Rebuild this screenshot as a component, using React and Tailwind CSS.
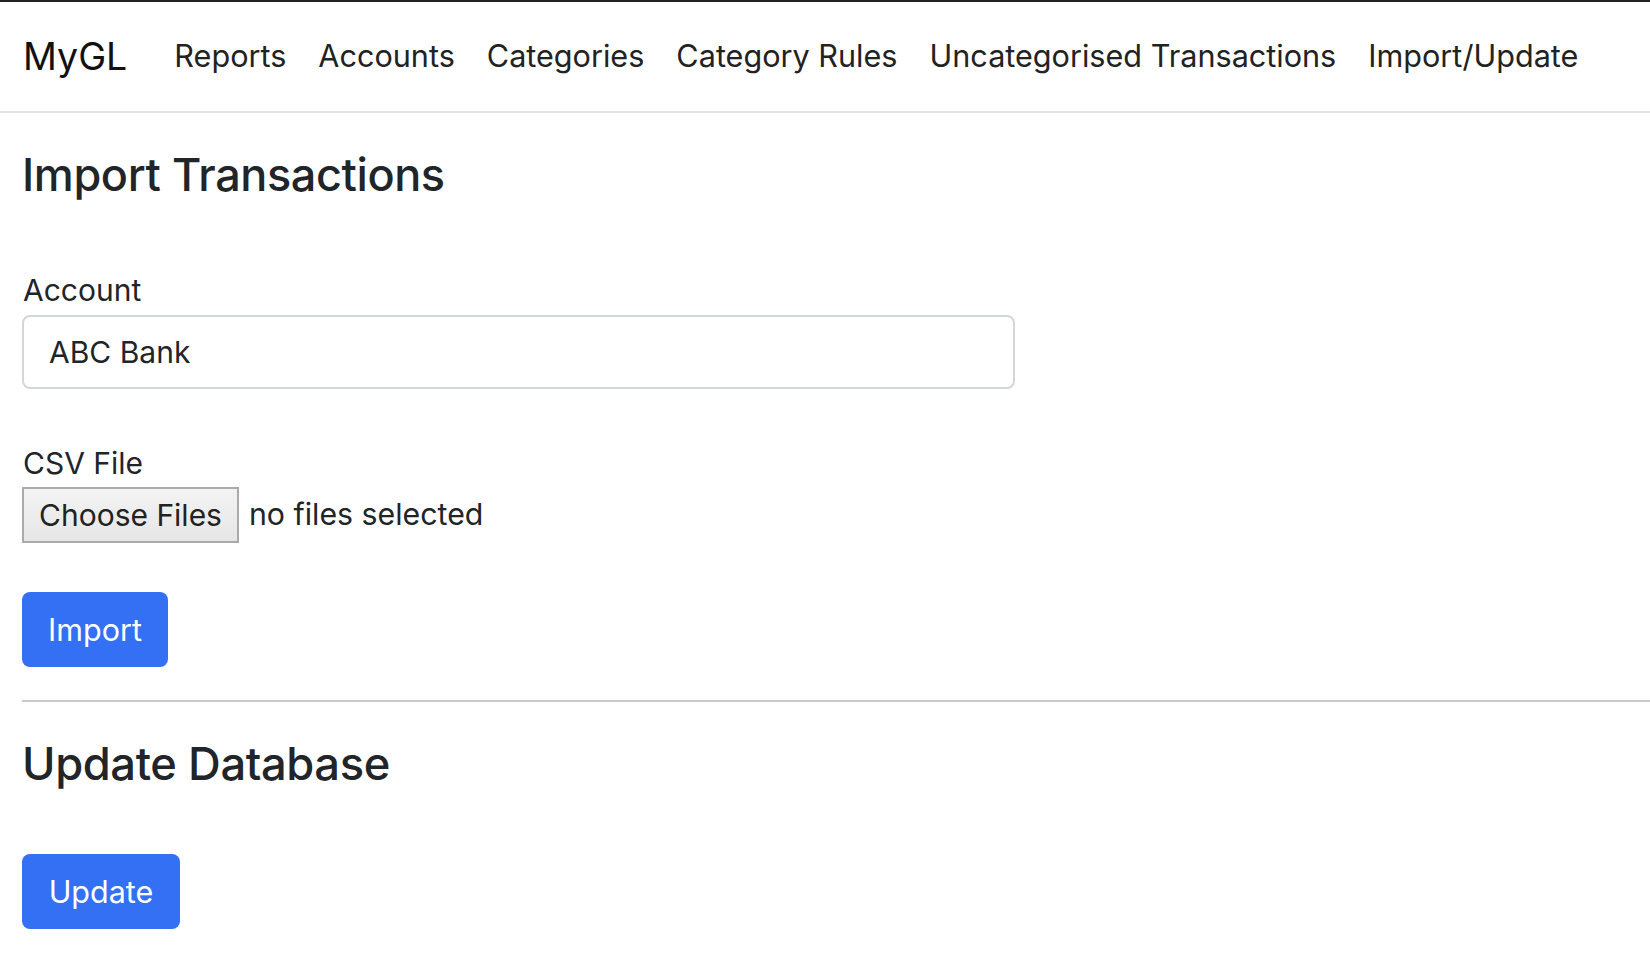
import React from 'react'

const links = ['Reports', 'Accounts', 'Categories', 'Category Rules', 'Uncategorised Transactions', 'Import/Update']

function NavBar() {
  return (
    <nav className="h-[111px] flex items-center pl-[23px] border-b-2 border-[#dee2e6]">
      <span className="text-[37.5px] text-[#111] mr-[47px] leading-none">MyGL</span>
      <div className="flex items-center gap-[32px]">
        {links.map(l => (
          <a key={l} className="text-[30.6px] text-[#222] leading-none">{l}</a>
        ))}
      </div>
    </nav>
  )
}

function BlueButton({children, w}) {
  return (
    <button className={`h-[75px] ${w} bg-[#3470f3] text-white text-[30.5px] rounded-[8px] flex items-center justify-center`}>
      {children}
    </button>
  )
}

export default function App() {
  return (
    <div className="min-h-screen bg-white text-[#212529] border-t-2 border-[#222]" style={{fontFamily: 'Inter, "Liberation Sans", sans-serif'}}>
      <NavBar />
      <main className="pl-[22px]">
        <h3 className="mt-[34px] text-[45px] font-medium leading-[56px] tracking-[-0.4px]">Import Transactions</h3>

        <label className="block mt-[69px] text-[30px] leading-[36px] pl-[1px]">Account</label>
        <div className="mt-[7px] w-[993px] h-[74px] border-2 border-[#d3d6da] rounded-[8px] flex items-center pl-[25px] text-[30px]">
          ABC Bank
        </div>

        <label className="block mt-[56px] text-[30px] leading-[36px] pl-[1px]">CSV File</label>
        <div className="mt-[6px] flex items-center">
          <button className="h-[56px] px-[15px] border-2 border-[#aaaaaa] bg-gradient-to-b from-[#f3f3f3] to-[#e6e6e6] text-[30px] text-[#222]">
            Choose Files
          </button>
          <span className="ml-[10px] text-[30.3px]">no files selected</span>
        </div>

        <div className="mt-[49px]">
          <BlueButton w="w-[146px]">Import</BlueButton>
        </div>

        <hr className="mt-[33px] border-0 border-t-2 border-[#c8c8c8]" />

        <h3 className="mt-[34px] text-[45.3px] font-medium leading-[56px] tracking-[-0.4px]">Update Database</h3>

        <div className="mt-[62px]">
          <BlueButton w="w-[158px]">Update</BlueButton>
        </div>
      </main>
    </div>
  )
}
